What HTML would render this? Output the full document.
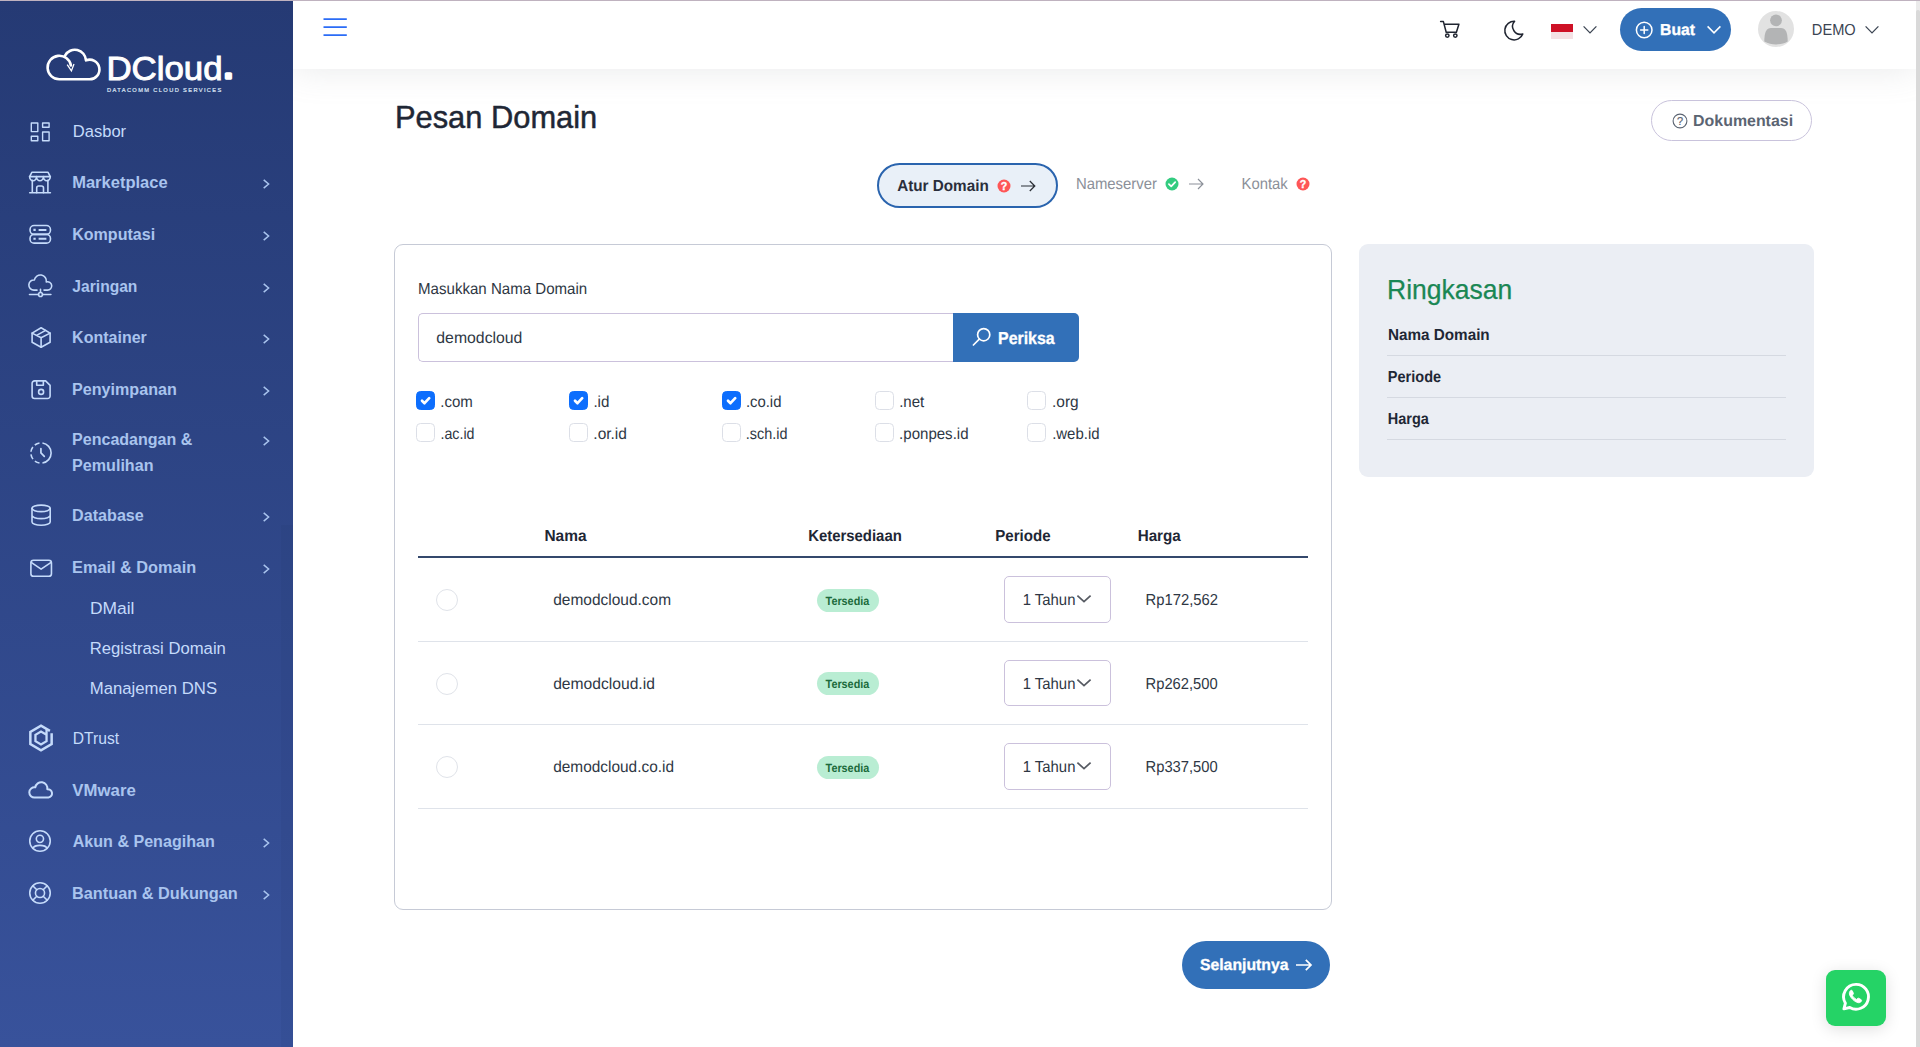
<!DOCTYPE html>
<html lang="id">
<head>
<meta charset="utf-8">
<title>Pesan Domain - DCloud</title>
<style>
*{box-sizing:border-box}
html,body{margin:0;padding:0}
body{position:relative;width:1920px;height:1047px;overflow:hidden;background:#fff;
  font-family:"Liberation Sans",Arial,sans-serif;color:#2e3744;font-size:14.55px}
.a{position:absolute}
.t{position:absolute;white-space:nowrap;line-height:1.2;display:block;transform-origin:0 0}
svg{position:absolute;overflow:visible}
.ic{fill:none;stroke:#c5dbfb;stroke-width:1.6;stroke-linecap:round;stroke-linejoin:round}
.chev{fill:none;stroke:#a9c4ee;stroke-width:1.5;stroke-linecap:butt;stroke-linejoin:miter}
/* frame */
#topline{left:0;top:0;width:1920px;height:1px;background:#bfb2bf;z-index:9}
#sidebar{left:0;top:0;width:293px;height:1047px;background:linear-gradient(180deg,#253a74 0%,#38529b 100%);z-index:3}
#sbthumb{left:281px;top:525px;width:12px;height:522px;background:rgba(20,30,80,.055);z-index:4}
nav .t,nav svg{z-index:5}
#topbar{left:293px;top:1px;width:1623px;height:68px;background:#fff;box-shadow:0 0 35px 0 rgba(150,156,160,.22);z-index:2}
header svg,header .t,header .a{z-index:6}
#scrolltrack{left:1916px;top:1px;width:4px;height:1046px;background:#ebebeb;z-index:8}
#scrollthumb{left:1916px;top:10px;width:4px;height:1037px;background:#d9d9d9;border-radius:2px 2px 0 0;z-index:8}
/* header widgets */
#buat{left:1620px;top:8px;width:111px;height:43px;border-radius:22px;background:#3270b8}
#avatar{left:1758px;top:11px;width:36px;height:36px;border-radius:50%;background:#e2e2e2;overflow:hidden}
#flag{left:1551px;top:24px;width:22px;height:15px;background:linear-gradient(180deg,#ce1126 0,#ce1126 50%,#f4e1e4 50%,#f4e1e4 100%)}
/* page head */
#docbtn{left:1651px;top:100px;width:161px;height:41px;border-radius:21px;border:1px solid #c9c3dc;background:#fff}
#step1{left:877px;top:163px;width:181px;height:45px;border-radius:23px;border:2px solid #2a64ae;background:#e9f0f8}
/* card */
#card{left:394px;top:244px;width:938px;height:666px;border:1px solid #c6cad6;border-radius:9px;background:#fff}
#domain{left:418px;top:313px;width:536px;height:49px;border:1px solid #cbc1dc;border-right:0;border-radius:5px 0 0 5px;background:#fff}
#periksa{left:953px;top:313px;width:126px;height:49px;border-radius:0 5px 5px 0;background:#3270b8}
.cb{position:absolute;width:19px;height:19px;border-radius:4.5px;border:1px solid #dcdfe7;background:#fff}
.cb.on{background:#0d6efd;border-color:#0d6efd}
#thline{left:418px;top:556px;width:890px;height:2px;background:#34486c}
.rline{position:absolute;left:418px;width:890px;height:1px;background:#dfe3ea}
.radio{position:absolute;left:436px;width:22px;height:22px;border-radius:50%;border:1px solid #e0e3e9;background:#fff}
.badge{position:absolute;left:816.5px;width:62.5px;height:23px;border-radius:12px;background:#b9edd3}
.sel{position:absolute;left:1004px;width:107px;height:46.5px;border:1px solid #cbc1dc;border-radius:5px;background:#fff}
/* summary */
#summary{left:1359px;top:244px;width:455px;height:233px;border-radius:9px;background:#ebeef4}
.sline{position:absolute;left:1387px;width:398.5px;height:1px;background:#d5d9e1}
#next{left:1182px;top:941px;width:148px;height:48px;border-radius:24px;background:#3270b8}
#wa{left:1826px;top:970px;width:60px;height:56px;border-radius:9px;background:#25d366;box-shadow:0 3px 16px rgba(0,0,0,.13)}
</style>
</head>
<body>
<div class="a" id="topline"></div>

<nav>
<div class="a" id="sidebar"></div>
<div class="a" id="sbthumb"></div>
<svg style="left:40px;top:40px;z-index:5" width="210" height="60" viewBox="40 40 210 60">
<g fill="none" stroke="#fff" stroke-width="2.6" stroke-linecap="round" stroke-linejoin="round">
<path d="M65 55.6A11.2 11.2 0 0 1 86 60.4A9.8 9.8 0 1 1 89.5 79.3H59.3A11.75 11.75 0 1 1 70.9 65.4"/>
</g>
<path d="M67.2 64.6L71.4 70.9L74 63.9" fill="none" stroke="#fff" stroke-width="1.3" stroke-linejoin="miter"/>
<text y="80.1" font-family="Liberation Sans, Arial, sans-serif" font-size="32.3" fill="#fff" stroke="#fff" stroke-width="0.9"><tspan x="106.4" textLength="116.2" lengthAdjust="spacingAndGlyphs">DCloud</tspan><tspan x="224.6" font-weight="700" font-size="28" stroke-width="3.4" stroke-linejoin="round" dy="-1.7">.</tspan></text>
<text x="107.1" y="91.9" font-family="Liberation Sans, Arial, sans-serif" font-size="5.7" fill="#dfe7f6" stroke="#dfe7f6" stroke-width="0.2" textLength="114.2" lengthAdjust="spacing">DATACOMM CLOUD SERVICES</text>
</svg>
<svg class="ic" style="left:28.40px;top:119.50px" width="24" height="24" viewBox="0 0 24 24" ><g stroke-width="1.4"><rect x="3.3" y="3.0" width="6.5" height="8.6"/><rect x="3.3" y="16.3" width="6.5" height="4.5"/><rect x="14.6" y="3.0" width="6.5" height="4.3"/><rect x="14.6" y="12.0" width="6.5" height="8.8"/></g></svg>
<svg class="ic" style="left:28.05px;top:170.30px" width="24" height="24" viewBox="0 0 24 24" ><path d="M1.7 22.7H22.4M4.3 10.4V22.7M19.9 10.4V22.7M3.85 2.3H20.05L22.3 6.6H1.6Z"/><path d="M1.6 6.6a3.45 4.2 0 0 0 6.9 0a3.45 4.2 0 0 0 6.9 0a3.45 4.2 0 0 0 6.9 0"/><path d="M8.7 22.7V18a2 2 0 0 1 2-2h2.8a2 2 0 0 1 2 2V22.7"/></svg>
<svg class="ic" style="left:28.40px;top:222.50px" width="24" height="24" viewBox="0 0 24 24" ><rect x="2.05" y="2.57" width="20.4" height="8.8" rx="4"/><rect x="2.05" y="11.37" width="20.4" height="8.8" rx="4"/><path d="M10.6 6.97H18.4M10.6 15.77H18.4" stroke-width="1.9" stroke-linecap="butt"/><path d="M5.4 6.97H7.7M5.4 15.77H7.7" stroke-width="2.2" stroke-linecap="butt"/></svg>
<svg class="ic" style="left:28.40px;top:274.00px" width="24" height="24" viewBox="0 0 24 24" ><path d="M9 16.15H6A5.1 5.1 0 1 1 6.4 5.97A5.9 5.9 0 0 1 18.3 8A4.15 4.15 0 1 1 19.4 16.1H16"/><path d="M12.5 15.2V18.3M1.5 20.45H10.5M14.5 20.45H22.9"/><circle cx="12.5" cy="20.45" r="2"/></svg>
<svg class="ic" style="left:28.85px;top:325.60px" width="24" height="24" viewBox="0 0 24 24" ><path d="M12.1 1.7L21.1 7.1V16.2L12.1 21.2L3.1 16.2V7.1Z"/><path d="M3.1 7.1L12.1 11.7L21.1 7.1M12.1 11.7V21.2M16.6 4.4L7.6 9.4"/></svg>
<svg class="ic" style="left:28.55px;top:377.60px" width="24" height="24" viewBox="0 0 24 24" ><path d="M5.6 2.85H16.6L21.1 7.4V17.95a2.5 2.5 0 0 1-2.5 2.5H5.6a2.5 2.5 0 0 1-2.5-2.5V5.35a2.5 2.5 0 0 1 2.5-2.5Z"/><path d="M7.7 2.85V7.2H14.35V2.85"/><circle cx="12.1" cy="13.9" r="2.5"/></svg>
<svg class="ic" style="left:28.58px;top:440.90px" width="24" height="24" viewBox="0 0 24 24" ><path d="M13.45 2A10.1 10.1 0 0 1 13.45 22" stroke-linecap="butt"/><path d="M10.5 2.01A10.1 10.1 0 0 0 10.5 21.99" stroke-dasharray="5.13 2.73" stroke-linecap="butt"/><path d="M11.92 7.5V11.9L15.3 15.4" stroke-width="1.7"/></svg>
<svg class="ic" style="left:28.85px;top:503.45px" width="24" height="24" viewBox="0 0 24 24" ><ellipse cx="12.1" cy="5.35" rx="9.1" ry="3.25"/><path d="M3 5.35V19A9.1 3.3 0 0 0 21.2 19V5.35M3 12.3A9.1 3.3 0 0 0 21.2 12.3"/></svg>
<svg class="ic" style="left:28.85px;top:555.55px" width="24" height="24" viewBox="0 0 24 24" ><rect x="1.9" y="4.3" width="20.56" height="16" rx="2.6"/><path d="M2.2 6.3L12.1 13.2L22.1 6.3"/></svg>
<svg class="ic" style="left:26.5px;top:723.3px" width="28" height="30" viewBox="0 0 28 30"><path d="M24.65 10.3V21.15L14 27.3L3.35 21.15V8.85L14 2.7L22.9 7.85" stroke-width="2.5" stroke-linecap="butt" stroke-linejoin="miter"/><path d="M19.55 6.6V18.2L14 21.41L8.45 18.2V11.8L14 8.59L19.55 11.8" stroke-width="2.3" stroke-linecap="butt" stroke-linejoin="miter"/></svg>
<svg class="ic" style="left:29.05px;top:778.15px" width="24" height="24" viewBox="0 0 24 24" ><path d="M6 19.5A5.15 5.15 0 1 1 6.3 9.3A5.7 5.7 0 0 1 18.3 11.25A4.15 4.15 0 1 1 19.45 19.5Z" stroke-width="2.0"/></svg>
<svg class="ic" style="left:28.20px;top:829.35px" width="24" height="24" viewBox="0 0 24 24" ><circle cx="12" cy="12" r="10.25"/><circle cx="11.92" cy="9.85" r="3.6"/><path d="M4.7 19.4C6.6 15.4 17.3 15.4 19.2 19.4"/></svg>
<svg class="ic" style="left:28.12px;top:881.35px" width="24" height="24" viewBox="0 0 24 24" ><circle cx="12" cy="12" r="10.25"/><circle cx="12" cy="12" r="4.55"/><path d="M4.75 4.75L8.8 8.8M19.25 4.75L15.2 8.8M4.75 19.25L8.8 15.2M19.25 19.25L15.2 15.2"/></svg>
<svg class="chev" style="left:260px;top:177.65px" width="12" height="12" viewBox="0 0 12 12"><path d="M3.7 1.85L8.6 6L3.7 10.15"/></svg>
<svg class="chev" style="left:260px;top:229.75px" width="12" height="12" viewBox="0 0 12 12"><path d="M3.7 1.85L8.6 6L3.7 10.15"/></svg>
<svg class="chev" style="left:260px;top:281.65px" width="12" height="12" viewBox="0 0 12 12"><path d="M3.7 1.85L8.6 6L3.7 10.15"/></svg>
<svg class="chev" style="left:260px;top:333.05px" width="12" height="12" viewBox="0 0 12 12"><path d="M3.7 1.85L8.6 6L3.7 10.15"/></svg>
<svg class="chev" style="left:260px;top:384.65px" width="12" height="12" viewBox="0 0 12 12"><path d="M3.7 1.85L8.6 6L3.7 10.15"/></svg>
<svg class="chev" style="left:260px;top:434.85px" width="12" height="12" viewBox="0 0 12 12"><path d="M3.7 1.85L8.6 6L3.7 10.15"/></svg>
<svg class="chev" style="left:260px;top:510.65px" width="12" height="12" viewBox="0 0 12 12"><path d="M3.7 1.85L8.6 6L3.7 10.15"/></svg>
<svg class="chev" style="left:260px;top:562.65px" width="12" height="12" viewBox="0 0 12 12"><path d="M3.7 1.85L8.6 6L3.7 10.15"/></svg>
<svg class="chev" style="left:260px;top:836.85px" width="12" height="12" viewBox="0 0 12 12"><path d="M3.7 1.85L8.6 6L3.7 10.15"/></svg>
<svg class="chev" style="left:260px;top:888.65px" width="12" height="12" viewBox="0 0 12 12"><path d="M3.7 1.85L8.6 6L3.7 10.15"/></svg>
<span class="t nav" style="left:72px;top:122px;font-size:16.8px;color:#c5dbfb;transform:translateX(0.74px) scaleX(0.9871)">Dasbor</span>
<span class="t nav" style="left:72px;top:173px;font-size:16.8px;font-weight:700;color:#a9c4ee;transform:translateX(0.16px) scaleX(0.9839)">Marketplace</span>
<span class="t nav" style="left:72px;top:225px;font-size:16.8px;font-weight:700;color:#a9c4ee;transform:translateX(0.22px) scaleX(0.9559)">Komputasi</span>
<span class="t nav" style="left:72px;top:277px;font-size:16.8px;font-weight:700;color:#a9c4ee;transform:translateX(0.37px) scaleX(0.9298)">Jaringan</span>
<span class="t nav" style="left:72px;top:328px;font-size:16.8px;font-weight:700;color:#a9c4ee;transform:translateX(0.10px) scaleX(0.9544)">Kontainer</span>
<span class="t nav" style="left:72px;top:380px;font-size:16.8px;font-weight:700;color:#a9c4ee;transform:translateX(0.09px) scaleX(0.9595)">Penyimpanan</span>
<span class="t nav" style="left:72px;top:430px;font-size:16.8px;font-weight:700;color:#a9c4ee;transform:translateX(0.10px) scaleX(0.9551)">Pencadangan &amp;</span>
<span class="t nav" style="left:72px;top:456px;font-size:16.8px;font-weight:700;color:#a9c4ee;transform:translateX(0.09px) scaleX(0.9589)">Pemulihan</span>
<span class="t nav" style="left:72px;top:506px;font-size:16.8px;font-weight:700;color:#a9c4ee;transform:translateX(0.08px) scaleX(0.9609)">Database</span>
<span class="t nav" style="left:72px;top:558px;font-size:16.8px;font-weight:700;color:#a9c4ee;transform:translateX(0.04px) scaleX(0.9712)">Email &amp; Domain</span>
<span class="t nav" style="left:89px;top:599px;font-size:16.8px;color:#c5dbfb;transform:translateX(0.91px) scaleX(1.0383)">DMail</span>
<span class="t nav" style="left:89px;top:639px;font-size:16.8px;color:#c5dbfb;transform:translateX(0.74px) scaleX(0.9928)">Registrasi Domain</span>
<span class="t nav" style="left:89px;top:679px;font-size:16.8px;color:#c5dbfb;transform:translateX(0.74px) scaleX(0.9964)">Manajemen DNS</span>
<span class="t nav" style="left:72px;top:729px;font-size:16.8px;color:#c5dbfb;transform:translateX(0.72px) scaleX(0.9319)">DTrust</span>
<span class="t nav" style="left:72px;top:781px;font-size:16.8px;font-weight:700;color:#a9c4ee;transform:translateX(0.36px) scaleX(0.9995)">VMware</span>
<span class="t nav" style="left:72px;top:832px;font-size:16.8px;font-weight:700;color:#a9c4ee;transform:translateX(0.75px) scaleX(0.9577)">Akun &amp; Penagihan</span>
<span class="t nav" style="left:72px;top:884px;font-size:16.8px;font-weight:700;color:#a9c4ee;transform:translateX(0.03px) scaleX(0.9716)">Bantuan &amp; Dukungan</span>
</nav>

<header>
<div class="a" id="topbar"></div>
<svg style="left:320px;top:14px;z-index:6" width="30" height="26" viewBox="0 0 30 26"><path d="M3.5 5.1H26.8M3.5 13.1H26.8M3.5 21.1H26.8" stroke="#2b6cf6" stroke-width="1.7" fill="none"/></svg>
<svg style="left:1438px;top:17px;z-index:6" width="24" height="24" viewBox="0 0 24 24" fill="none" stroke="#1f2430" stroke-width="1.5" stroke-linecap="round" stroke-linejoin="round"><path d="M2.6 4.6H5.4L8.2 15.2H18.4L20.9 7.2H6.3"/><circle cx="9.3" cy="18.6" r="1.7"/><circle cx="17.3" cy="18.6" r="1.7"/></svg>
<svg style="left:1502px;top:18.6px;z-index:6" width="24" height="24" viewBox="0 0 24 24" fill="none" stroke="#1f2430" stroke-width="1.5" stroke-linecap="round" stroke-linejoin="round"><path d="M12.6 2.3A9.3 9.3 0 1 0 20.8 14.9A7.8 7.8 0 0 1 12.6 2.3Z"/></svg>
<svg style="left:1582px;top:24px;z-index:6" width="16" height="12" viewBox="0 0 16 12" fill="none" stroke="#3b4452" stroke-width="1.25"><path d="M1.6 2.4L8 8.9L14.4 2.4"/></svg>
<div class="a" id="flag"></div>
<div class="a" id="buat"></div>
<div class="a" id="avatar"><svg style="left:0;top:0" width="36" height="36" viewBox="0 0 36 36"><circle cx="18" cy="9.3" r="5.9" fill="#b3b4b5"/><path d="M6.3 30.5C6.3 21 8.5 17 13 17H23C27.5 17 29.7 21 29.7 30.5C26 32.6 22 33.4 18 33.4C14 33.4 10 32.6 6.3 30.5Z" fill="#b3b4b5"/></svg></div>
<svg style="left:1633.6px;top:19.6px;z-index:7" width="20" height="20" viewBox="0 0 20 20" fill="none" stroke="#fff" stroke-width="1.5" stroke-linecap="round"><circle cx="10.2" cy="10" r="7.8"/><path d="M10.2 6.4V13.6M6.6 10H13.8"/></svg>
<svg style="left:1705.5px;top:24px;z-index:7" width="16" height="12" viewBox="0 0 16 12" fill="none" stroke="#fff" stroke-width="1.5"><path d="M1.6 2.4L8 8.9L14.4 2.4"/></svg>
<svg style="left:1864.3px;top:24px;z-index:7" width="16" height="12" viewBox="0 0 16 12" fill="none" stroke="#3b4452" stroke-width="1.25"><path d="M1.6 2.4L8 8.9L14.4 2.4"/></svg>
<span class="t hdr" style="left:1660px;top:21px;font-size:15.9px;font-weight:700;color:#fff;transform:translateX(0.06px) scaleX(0.9879);-webkit-text-stroke:0.35px #fff;text-rendering:geometricPrecision">Buat</span>
<span class="t hdr" style="left:1811px;top:21px;font-size:15.9px;color:#3b4452;transform:translateX(0.83px) scaleX(0.9210);text-rendering:geometricPrecision">DEMO</span>
</header>

<main>
<section>
<div class="a" id="docbtn"></div>
<span class="t head" style="left:1693px;top:112px;font-size:15.9px;font-weight:700;color:#5b6472;transform:translateX(0.08px) scaleX(1.0020);text-rendering:geometricPrecision">Dokumentasi</span>
<span class="t head" style="left:394px;top:98px;font-size:31.6px;color:#1f2735;transform:translate(0.97px,0.70px) scaleX(0.9760);-webkit-text-stroke:0.5px #1f2735">Pesan Domain</span>
<div class="a" id="step1"></div>
<svg style="left:996.60px;top:178.60px" width="14" height="14" viewBox="0 0 14 14"><circle cx="7" cy="7" r="6.5" fill="#fe5656"/><text x="7" y="10.6" text-anchor="middle" font-family="Liberation Sans, Arial, sans-serif" font-weight="700" font-size="10.6" fill="#fff" stroke="#fff" stroke-width="0.35">?</text></svg>
<svg style="left:1021.40px;top:178.50px" width="14.40" height="14" viewBox="0 0 14.40 14" fill="none" stroke="#2b2f36" stroke-width="1.25"><path d="M0 7H13.60M8.80 2.00L13.80 7L8.80 12.00"/></svg>
<svg style="left:1164.7px;top:176.6px" width="14" height="14" viewBox="0 0 14 14"><circle cx="7" cy="7" r="6.5" fill="#33cc80"/><path d="M3.9 7.2L6.2 9.4L10.2 5.1" fill="none" stroke="#fff" stroke-width="1.7" stroke-linecap="round" stroke-linejoin="round"/></svg>
<svg style="left:1188.60px;top:176.80px" width="14.60" height="14" viewBox="0 0 14.60 14" fill="none" stroke="#8b9099" stroke-width="1.15"><path d="M0 7H13.80M9.00 2.00L14.00 7L9.00 12.00"/></svg>
<svg style="left:1296.00px;top:176.60px" width="14" height="14" viewBox="0 0 14 14"><circle cx="7" cy="7" r="6.5" fill="#fe5656"/><text x="7" y="10.6" text-anchor="middle" font-family="Liberation Sans, Arial, sans-serif" font-weight="700" font-size="10.6" fill="#fff" stroke="#fff" stroke-width="0.35">?</text></svg>
<svg style="left:1671.5px;top:112.5px" width="16" height="16" viewBox="0 0 16 16"><circle cx="8" cy="8" r="6.9" fill="none" stroke="#5b6472" stroke-width="1.1"/><text x="8" y="11.9" text-anchor="middle" font-family="Liberation Sans, Arial, sans-serif" font-size="11" fill="#5b6472" stroke="#5b6472" stroke-width="0.2">?</text></svg>
<span class="t steps" style="left:897px;top:177px;font-size:15.9px;font-weight:700;color:#2a2e3b;transform:translateX(0.14px) scaleX(0.9603);text-rendering:geometricPrecision">Atur Domain</span>
<span class="t steps" style="left:1075px;top:175px;font-size:15.9px;color:#8b9099;transform:translateX(0.89px) scaleX(0.9374);text-rendering:geometricPrecision">Nameserver</span>
<span class="t steps" style="left:1241px;top:175px;font-size:15.9px;color:#8b9099;transform:translateX(0.56px) scaleX(0.9339);text-rendering:geometricPrecision">Kontak</span>
</section>

<section>
<div class="a" id="card"></div>
<div class="a" id="domain"></div>
<div class="a" id="periksa"></div>
<svg style="left:971px;top:326.2px" width="22" height="22" viewBox="0 0 22 22" fill="none" stroke="#fff" stroke-width="1.7" stroke-linecap="round"><circle cx="12.7" cy="8.7" r="6.1"/><path d="M8.3 13.1L2.4 19"/></svg>
<span class="t form" style="left:418px;top:280px;font-size:15.9px;color:#2e3744;transform:translateX(0.07px) scaleX(0.9480);text-rendering:geometricPrecision">Masukkan Nama Domain</span>
<span class="t form" style="left:436px;top:329px;font-size:15.9px;color:#2e3744;transform:translateX(0.34px) scaleX(0.9938);text-rendering:geometricPrecision">demodcloud</span>
<span class="t form" style="left:998px;top:328px;font-size:17.4px;font-weight:700;color:#fff;transform:translateX(0.01px) scaleX(0.9155);-webkit-text-stroke:0.3px #fff;text-rendering:geometricPrecision">Periksa</span>
<div class="cb on" style="left:416.0px;top:390.6px"><svg style="left:-1px;top:-1px" width="19" height="19" viewBox="0 0 19 19"><path d="M6 9.7L8.5 12.2L13.2 7.2" fill="none" stroke="#fff" stroke-width="2.7" stroke-linecap="round" stroke-linejoin="round"/></svg></div>
<div class="cb on" style="left:569.0px;top:390.6px"><svg style="left:-1px;top:-1px" width="19" height="19" viewBox="0 0 19 19"><path d="M6 9.7L8.5 12.2L13.2 7.2" fill="none" stroke="#fff" stroke-width="2.7" stroke-linecap="round" stroke-linejoin="round"/></svg></div>
<div class="cb on" style="left:722.0px;top:390.6px"><svg style="left:-1px;top:-1px" width="19" height="19" viewBox="0 0 19 19"><path d="M6 9.7L8.5 12.2L13.2 7.2" fill="none" stroke="#fff" stroke-width="2.7" stroke-linecap="round" stroke-linejoin="round"/></svg></div>
<div class="cb" style="left:875.0px;top:390.6px"></div>
<div class="cb" style="left:1027.0px;top:390.6px"></div>
<div class="cb" style="left:416.0px;top:422.9px"></div>
<div class="cb" style="left:569.0px;top:422.9px"></div>
<div class="cb" style="left:722.0px;top:422.9px"></div>
<div class="cb" style="left:875.0px;top:422.9px"></div>
<div class="cb" style="left:1027.0px;top:422.9px"></div>
<span class="t tld" style="left:440px;top:393px;font-size:15.9px;transform:translateX(0.28px) scaleX(0.9463);text-rendering:geometricPrecision">.com</span>
<span class="t tld" style="left:593px;top:393px;font-size:15.9px;transform:translateX(0.40px) scaleX(0.9554);text-rendering:geometricPrecision">.id</span>
<span class="t tld" style="left:745px;top:393px;font-size:15.9px;transform:translateX(0.88px) scaleX(0.9352);text-rendering:geometricPrecision">.co.id</span>
<span class="t tld" style="left:899px;top:393px;font-size:15.9px;transform:translateX(0.14px) scaleX(0.9458);text-rendering:geometricPrecision">.net</span>
<span class="t tld" style="left:1052px;top:393px;font-size:15.9px;transform:translateX(0.05px) scaleX(0.9729);text-rendering:geometricPrecision">.org</span>
<span class="t tld" style="left:440px;top:425px;font-size:15.9px;transform:translateX(0.46px) scaleX(0.8952);text-rendering:geometricPrecision">.ac.id</span>
<span class="t tld" style="left:593px;top:425px;font-size:15.9px;transform:translateX(0.34px) scaleX(0.9743);text-rendering:geometricPrecision">.or.id</span>
<span class="t tld" style="left:745px;top:425px;font-size:15.9px;transform:translateX(0.78px) scaleX(0.9060);text-rendering:geometricPrecision">.sch.id</span>
<span class="t tld" style="left:899px;top:425px;font-size:15.9px;transform:translateX(0.12px) scaleX(0.9463);text-rendering:geometricPrecision">.ponpes.id</span>
<span class="t tld" style="left:1052px;top:425px;font-size:15.9px;transform:translateX(0.16px) scaleX(0.9412);text-rendering:geometricPrecision">.web.id</span>
<span class="t th" style="left:544px;top:527px;font-size:15.9px;font-weight:700;color:#1f2735;transform:translateX(0.43px) scaleX(0.9727);text-rendering:geometricPrecision">Nama</span>
<span class="t th" style="left:808px;top:527px;font-size:15.9px;font-weight:700;color:#1f2735;transform:translateX(0.14px) scaleX(0.9384);text-rendering:geometricPrecision">Ketersediaan</span>
<span class="t th" style="left:995px;top:527px;font-size:15.9px;font-weight:700;color:#1f2735;transform:translateX(0.22px) scaleX(0.9494);text-rendering:geometricPrecision">Periode</span>
<span class="t th" style="left:1137px;top:527px;font-size:15.9px;font-weight:700;color:#1f2735;transform:translateX(0.65px) scaleX(0.9568);text-rendering:geometricPrecision">Harga</span>
<div class="a" id="thline"></div>
<div class="radio" style="top:588.6px"></div>
<div class="badge" style="top:588.9px"></div>
<div class="sel" style="top:576.3px"></div>
<svg style="left:1075.6px;top:593.0px" width="16" height="12" viewBox="0 0 16 12" fill="none" stroke="#565a62" stroke-width="1.7"><path d="M1.4 2.6L8 8.7L14.6 2.6"/></svg>
<span class="t row1" style="left:553px;top:591px;font-size:15.9px;transform:translateX(0.19px) scaleX(0.9741);text-rendering:geometricPrecision">demodcloud.com</span>
<span class="t row1 bdg" style="left:825px;top:594px;font-size:11.9px;font-weight:700;color:#1c6b3c;transform:translateX(0.57px) scaleX(0.9099);text-rendering:geometricPrecision">Tersedia</span>
<span class="t row1" style="left:1022px;top:591px;font-size:15.9px;transform:translateX(0.73px) scaleX(0.9365);text-rendering:geometricPrecision">1 Tahun</span>
<span class="t row1" style="left:1145px;top:591px;font-size:15.9px;transform:translateX(0.55px) scaleX(0.9309);text-rendering:geometricPrecision">Rp172,562</span>
<div class="rline" style="top:641px"></div>
<div class="radio" style="top:672.7px"></div>
<div class="badge" style="top:672.4px"></div>
<div class="sel" style="top:659.8px"></div>
<svg style="left:1075.6px;top:676.5px" width="16" height="12" viewBox="0 0 16 12" fill="none" stroke="#565a62" stroke-width="1.7"><path d="M1.4 2.6L8 8.7L14.6 2.6"/></svg>
<span class="t row2" style="left:553px;top:675px;font-size:15.9px;transform:translateX(0.18px) scaleX(0.9838);text-rendering:geometricPrecision">demodcloud.id</span>
<span class="t row2 bdg" style="left:825px;top:677px;font-size:11.9px;font-weight:700;color:#1c6b3c;transform:translateX(0.57px) scaleX(0.9099);text-rendering:geometricPrecision">Tersedia</span>
<span class="t row2" style="left:1022px;top:675px;font-size:15.9px;transform:translateX(0.73px) scaleX(0.9365);text-rendering:geometricPrecision">1 Tahun</span>
<span class="t row2" style="left:1145px;top:675px;font-size:15.9px;transform:translateX(0.56px) scaleX(0.9277);text-rendering:geometricPrecision">Rp262,500</span>
<div class="rline" style="top:724px"></div>
<div class="radio" style="top:755.6px"></div>
<div class="badge" style="top:755.9px"></div>
<div class="sel" style="top:743.3px"></div>
<svg style="left:1075.6px;top:760.0px" width="16" height="12" viewBox="0 0 16 12" fill="none" stroke="#565a62" stroke-width="1.7"><path d="M1.4 2.6L8 8.7L14.6 2.6"/></svg>
<span class="t row3" style="left:553px;top:758px;font-size:15.9px;transform:translateX(0.21px) scaleX(0.9695);text-rendering:geometricPrecision">demodcloud.co.id</span>
<span class="t row3 bdg" style="left:825px;top:761px;font-size:11.9px;font-weight:700;color:#1c6b3c;transform:translateX(0.57px) scaleX(0.9099);text-rendering:geometricPrecision">Tersedia</span>
<span class="t row3" style="left:1022px;top:758px;font-size:15.9px;transform:translateX(0.73px) scaleX(0.9365);text-rendering:geometricPrecision">1 Tahun</span>
<span class="t row3" style="left:1145px;top:758px;font-size:15.9px;transform:translateX(0.56px) scaleX(0.9277);text-rendering:geometricPrecision">Rp337,500</span>
<div class="rline" style="top:808px"></div>
</section>

<aside>
<div class="a" id="summary"></div>
<span class="t sum" style="left:1387px;top:272px;font-size:28px;color:#1a8754;transform:translate(0.01px,0.70px) scaleX(0.9473);-webkit-text-stroke:0.25px #1a8754">Ringkasan</span>
<span class="t sum" style="left:1387px;top:326px;font-size:15.9px;font-weight:700;color:#1f2735;transform:translateX(0.90px) scaleX(0.9606);text-rendering:geometricPrecision">Nama Domain</span>
<span class="t sum" style="left:1387px;top:368px;font-size:15.9px;font-weight:700;color:#1f2735;transform:translateX(0.83px) scaleX(0.9133);text-rendering:geometricPrecision">Periode</span>
<span class="t sum" style="left:1387px;top:410px;font-size:15.9px;font-weight:700;color:#1f2735;transform:translateX(0.82px) scaleX(0.9125);text-rendering:geometricPrecision">Harga</span>
<div class="sline" style="top:355px"></div>
<div class="sline" style="top:397px"></div>
<div class="sline" style="top:439px"></div>
</aside>

<div class="a" id="next"></div>
<span class="t next" style="left:1199px;top:956px;font-size:15.9px;font-weight:700;color:#fff;transform:translateX(0.90px) scaleX(0.9936);-webkit-text-stroke:0.3px #fff;text-rendering:geometricPrecision">Selanjutnya</span>
<svg style="left:1296.20px;top:958.00px" width="15.60" height="14" viewBox="0 0 15.60 14" fill="none" stroke="#fff" stroke-width="1.70"><path d="M0 7H14.80M9.80 1.80L15.00 7L9.80 12.20"/></svg>
<div class="a" id="wa"></div>
<svg style="left:1840px;top:980.8px" width="32" height="32" viewBox="0 0 32 32"><path d="M16 3.4A12.4 12.4 0 0 0 5.4 22.2L3.9 27.8L9.8 26.5A12.4 12.4 0 1 0 16 3.4Z" fill="none" stroke="#fff" stroke-width="2.9" stroke-linejoin="round"/><path d="M11.6 9.3c-.5-.1-1 .1-1.4.6c-1.500 1.800-.9 4.300.9 6.700c1.900 2.500 4.500 4.700 7.300 5.100c1.200.1 2.400-.5 3-1.500c.3-.6.3-1.200-.2-1.500l-2.400-1.400c-.5-.3-1-.2-1.300.2l-.9 1c-1.900-.9-3.400-2.300-4.400-4.100l.9-.9c.4-.4.400-.9.2-1.400l-1-2.300c-.100-.3-.4-.5-.700-.5Z" fill="#fff" stroke="#fff" stroke-width="0.9" stroke-linejoin="round"/></svg>
</main>
<div class="a" id="scrolltrack"></div>
<div class="a" id="scrollthumb"></div>
</body>
</html>
